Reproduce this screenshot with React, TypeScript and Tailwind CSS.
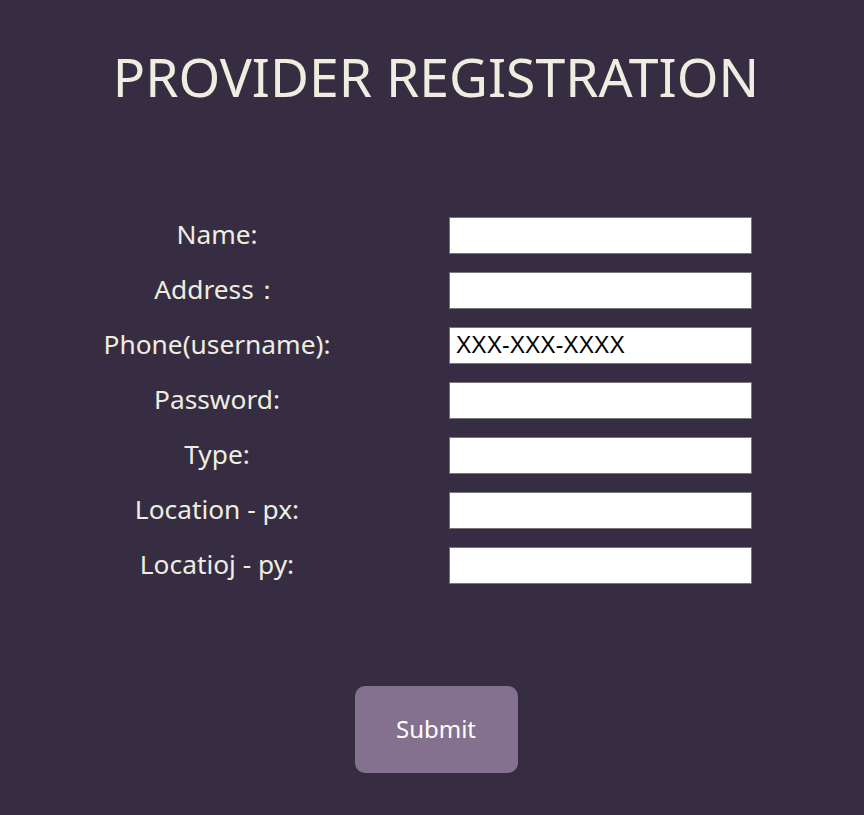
const fields = [
  { label: "Name:", value: "" },
  { label: "Address\uFF1A", value: "" },
  { label: "Phone(username):", value: "XXX-XXX-XXXX" },
  { label: "Password:", value: "" },
  { label: "Type:", value: "" },
  { label: "Location - px:", value: "" },
  { label: "Locatioj - py:", value: "" },
];

export default function App() {
  return (
    <div className="min-h-[815px] w-full bg-[#372d43] font-['Noto_Sans',sans-serif]">
      <h1 className="pl-[8px] pt-[42px] text-center text-[53.5px] font-normal leading-[70px] text-[#eeeee0]">
        PROVIDER REGISTRATION
      </h1>

      <form className="mt-[105px] pl-[90px]">
        <div className="flex flex-col gap-[18px]">
          {fields.map((f) => (
            <div key={f.label} className="flex h-[37px] items-center">
              <label className="-mt-[3px] w-[254px] text-center text-[26.3px] leading-[37px] text-[#eeeee0]">
                {f.label}
              </label>
              <input
                type="text"
                defaultValue={f.value}
                className="ml-[105px] h-[37px] w-[303px] border border-[#767676] bg-white px-[6px] font-['Liberation_Sans',sans-serif] text-[23px] text-black outline-none"
              />
            </div>
          ))}
        </div>
      </form>

      <div className="mt-[102px] flex justify-center pb-[42px] pl-[8px]">
        <button
          type="button"
          className="h-[87px] w-[163px] rounded-[10px] bg-[#84708f] pb-[2px] text-[24px] text-white"
        >
          Submit
        </button>
      </div>
    </div>
  );
}
